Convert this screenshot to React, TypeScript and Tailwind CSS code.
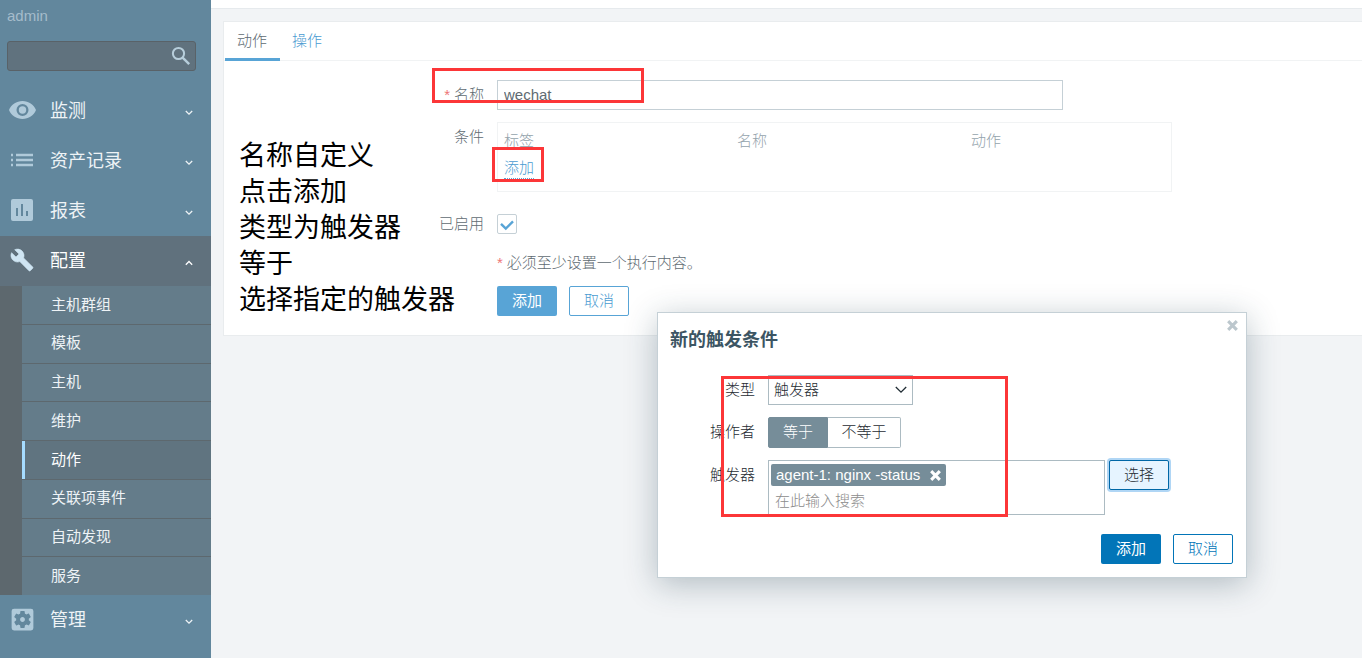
import React, { useState } from 'react';
import { MdSettingsApplications } from 'react-icons/md';

const configItems = ['主机群组', '模板', '主机', '维护', '动作', '关联项事件', '自动发现', '服务'];

const notes = ['名称自定义', '点击添加', '类型为触发器', '等于', '选择指定的触发器'];

function SearchIcon() {
  return (
    <svg viewBox="0 0 20 20" className="w-5 h-5" fill="none" stroke="currentColor" strokeWidth="2">
      <circle cx="7.5" cy="7.5" r="5.6" />
      <path d="M11.6 11.6l6.6 6.6" strokeWidth="2.4" />
    </svg>
  );
}

function EyeIcon() {
  return (
    <svg viewBox="0 0 27 18" className="w-[27px] h-[18px]" fill="currentColor" fillRule="evenodd">
      <path d="M13.5 0C7.4 0 2.2 3.7 0 9c2.2 5.3 7.4 9 13.5 9S24.8 14.3 27 9C24.8 3.7 19.6 0 13.5 0zM13.5 3a6 6 0 1 1 0 12a6 6 0 1 1 0-12z" />
      <circle cx="13.5" cy="9" r="3.7" />
    </svg>
  );
}

function ListIcon() {
  return (
    <svg viewBox="0 0 22 14" className="w-[22px] h-[14px]" fill="currentColor">
      <path d="M0 .7h2v2.6H0zM5 .7h17v2.6H5zM0 5.7h2v2.6H0zM5 5.7h17v2.6H5zM0 10.7h2v2.6H0zM5 10.7h17v2.6H5z" />
    </svg>
  );
}

function ReportIcon() {
  return (
    <svg viewBox="0 0 22 22" className="w-[22px] h-[22px]" fill="currentColor" fillRule="evenodd">
      <path d="M2 0h18a2 2 0 0 1 2 2v18a2 2 0 0 1-2 2H2a2 2 0 0 1-2-2V2a2 2 0 0 1 2-2zM5 9v8h2V9zM10 5v12h2V5zM15 12v5h2v-5z" />
    </svg>
  );
}

function WrenchIcon() {
  return (
    <svg viewBox="0 0 24 24" className="w-6 h-6" fill="currentColor" stroke="currentColor" strokeWidth=".6">
      <path d="M22.7 19l-9.1-9.1c.9-2.3.4-5-1.5-6.9-2-2-5-2.4-7.400-1.300L9 6 6 9 1.600 4.700C.4 7.100.9 10.100 2.900 12.100c1.900 1.900 4.600 2.400 6.900 1.500l9.100 9.100c.4.4 1 .4 1.400 0l2.300-2.300c.5-.4.5-1.100.1-1.400z" />
    </svg>
  );
}

function Chevron({ up = false }: { up?: boolean }) {
  return (
    <svg viewBox="0 0 8 6" className="w-2 h-[6px] mt-1" fill="none" stroke="currentColor" strokeWidth="1.3">
      <path d={up ? 'M.8 4.7L4 1.5l3.2 3.2' : 'M.8 1L4 4.2 7.2 1'} />
    </svg>
  );
}

function CrossIcon({ className }: { className: string }) {
  return (
    <svg viewBox="0 0 12 12" className={className} fill="none" stroke="currentColor" strokeWidth="3.4">
      <path d="M1.3 1.3l9.4 9.4M10.7 1.3l-9.4 9.4" />
    </svg>
  );
}

function MenuItem({ icon, label, open = false }: { icon: React.ReactNode; label: string; open?: boolean }) {
  return (
    <a
      href="#"
      className={
        open
          ? 'flex items-center h-[50px] pr-[18px] bg-[#60717d] text-white'
          : 'flex items-center h-[50px] pr-[18px] text-[#eef3f6]'
      }
    >
      <span
        className={
          open ? 'flex w-11 justify-center pb-[2px] text-[#cfe5f3]' : 'flex w-11 justify-center pb-[2px] text-[#b0cada]'
        }
      >
        {icon}
      </span>
      <span className="flex-1 pl-[6px] text-[18px]">{label}</span>
      <Chevron up={open} />
    </a>
  );
}

function Sidebar() {
  return (
    <aside className="w-[211px] shrink-0 bg-[#62879d] font-normal">
      <div className="px-[7px] pt-1 text-[#a5bccb] leading-6">admin</div>
      <div className="relative mt-[13px] ml-[7px] mr-[15px]">
        <input
          type="search"
          aria-label="搜索"
          className="block w-full h-[30px] rounded-[3px] border border-[#596268] bg-[#60727e] pl-2 pr-8 text-white outline-none"
        />
        <button aria-label="搜索" className="absolute right-[5px] top-[5px] text-[#b7cedb]">
          <SearchIcon />
        </button>
      </div>
      <nav className="mt-[15px]">
        <MenuItem icon={<EyeIcon />} label="监测" />
        <MenuItem icon={<ListIcon />} label="资产记录" />
        <MenuItem icon={<ReportIcon />} label="报表" />
        <MenuItem icon={<WrenchIcon />} label="配置" open />
        <ul className="grid grid-rows-8 gap-px h-[309px] pl-[22px] bg-[#5d686e]">
          {configItems.map((item) => (
            <li key={item} className="flex">
              <a
                href="#"
                className={
                  item === '动作'
                    ? 'flex flex-1 items-center border-l-[3px] border-[#a6dcff] bg-[#607480] pl-[26px] text-white'
                    : 'flex flex-1 items-center bg-[#647c8a] pl-[29px] text-[#eef3f6]'
                }
              >
                {item}
              </a>
            </li>
          ))}
        </ul>
        <MenuItem icon={<MdSettingsApplications size={29} />} label="管理" />
      </nav>
    </aside>
  );
}

function ActionForm() {
  const [name, setName] = useState('wechat');
  const [enabled, setEnabled] = useState(true);

  return (
    <section className="mt-3 ml-3 border border-r-0 border-[#e9ecee] bg-white pb-[19px] text-[#606b72]">
      <div className="flex h-[39px] border-b border-[#f1f3f4] pl-px">
        <a href="#" className="w-[55px] h-[39px] border-b-[3px] border-[#58a4d6] pl-3 leading-[38px]">
          动作
        </a>
        <a href="#" className="w-[55px] pl-3 leading-[38px] text-[#4a9bd1]">
          操作
        </a>
      </div>

      <form className="grid grid-cols-[260px_1fr] gap-x-[13px] pt-[19px]" onSubmit={(e) => e.preventDefault()}>
        <label htmlFor="name" className="h-[42px] text-right leading-[30px]">
          <span className="mr-1 text-[#ee7676]">*</span>名称
        </label>
        <div>
          <input
            id="name"
            value={name}
            onChange={(e) => setName(e.target.value)}
            className="block w-[566px] max-w-full h-[30px] border border-[#c5d0d6] px-[6px] pb-[2px] outline-none"
          />
        </div>

        <span className="text-right leading-[30px]">条件</span>
        <div className="w-[675px] max-w-full h-[70px] border border-[#f1f3f4] px-[6px] pt-1">
          <table className="w-full table-fixed text-left">
            <thead>
              <tr className="h-7 text-[#94a3ac]">
                <th className="w-[233px] p-0 font-light">标签</th>
                <th className="w-[234px] p-0 font-light">名称</th>
                <th className="p-0 font-light">动作</th>
              </tr>
            </thead>
            <tbody>
              <tr className="h-[26px]">
                <td colSpan={3} className="p-0">
                  <button type="button" className="border-b border-dotted border-[#58a4d6] leading-5 text-[#4a9bd1]">
                    添加
                  </button>
                </td>
              </tr>
            </tbody>
          </table>
        </div>

        <label htmlFor="enabled" className="mt-[22px] text-right leading-5">
          已启用
        </label>
        <div className="relative mt-[22px] w-5 h-5">
          <input
            id="enabled"
            type="checkbox"
            checked={enabled}
            onChange={(e) => setEnabled(e.target.checked)}
            className="block w-5 h-5 appearance-none rounded-[2px] border border-[#c5d0d6] bg-white"
          />
          {enabled && (
            <svg
              viewBox="0 0 20 20"
              className="pointer-events-none absolute inset-0 w-5 h-5"
              fill="none"
              stroke="#58a4d6"
              strokeWidth="2.4"
            >
              <path d="M4 9.8l4.8 4.8L16 7.4" />
            </svg>
          )}
        </div>

        <p className="col-start-2 mt-[19px] leading-5">
          <span className="mr-1 text-[#ee7676]">*</span>必须至少设置一个执行内容。
        </p>

        <div className="col-start-2 mt-[13px] flex gap-3">
          <button type="submit" className="w-[60px] h-[30px] rounded-[2px] bg-[#58a4d6] font-normal text-white">
            添加
          </button>
          <button type="button" className="w-[60px] h-[30px] rounded-[2px] border border-[#58a4d6] text-[#4a9bd1]">
            取消
          </button>
        </div>
      </form>
    </section>
  );
}

function ConditionDialog() {
  const [operator, setOperator] = useState('equals');

  return (
    <div
      role="dialog"
      aria-labelledby="dialog-title"
      className="absolute left-[446px] top-[312px] w-[590px] border border-[#c5d0d6] bg-white pb-[13px] pl-3 pr-[13px] text-[#1f2c33] shadow-[0_6px_30px_rgba(31,60,75,0.3)]"
    >
      <button aria-label="关闭" className="absolute right-2 top-[7px] text-[#bcc7cd]">
        <CrossIcon className="w-[11px] h-[11px]" />
      </button>
      <h2 id="dialog-title" className="pt-[15px] text-[18px] leading-6 font-bold text-[#3c5563]">
        新的触发条件
      </h2>

      <div className="mt-[23px] grid grid-cols-[85px_1fr] gap-x-[13px] gap-y-3">
        <label htmlFor="type" className="text-right leading-[30px]">
          类型
        </label>
        <div className="relative w-[145px]">
          <select id="type" className="block w-full h-[30px] appearance-none border border-[#acbbc2] bg-white px-[5px] outline-none">
            <option>触发器</option>
          </select>
          <svg
            viewBox="0 0 12 8"
            className="pointer-events-none absolute right-[6px] top-[11px] w-3 h-2"
            fill="none"
            stroke="currentColor"
            strokeWidth="1.3"
          >
            <path d="M.8 1L6 6.2 11.2 1" />
          </svg>
        </div>

        <span className="text-right leading-[30px]">操作者</span>
        <div className="flex h-[31px]">
          <label className="flex w-[60px] items-center justify-center rounded-l-[2px] border border-[#acbbc2] has-checked:border-[#768d99] has-checked:bg-[#768d99] has-checked:text-white">
            <input
              type="radio"
              name="operator"
              className="sr-only"
              checked={operator === 'equals'}
              onChange={() => setOperator('equals')}
            />
            等于
          </label>
          <label className="flex w-[73px] items-center justify-center rounded-r-[2px] border border-l-0 border-[#acbbc2] has-checked:border-[#768d99] has-checked:bg-[#768d99] has-checked:text-white">
            <input
              type="radio"
              name="operator"
              className="sr-only"
              checked={operator === 'differs'}
              onChange={() => setOperator('differs')}
            />
            不等于
          </label>
        </div>

        <label htmlFor="trigger" className="text-right leading-[30px]">
          触发器
        </label>
        <div className="flex items-start gap-1">
          <div className="w-[337px] h-[55px] border border-[#acbbc2] px-[2px] pt-[3px]">
            <span className="flex w-fit h-[22px] items-center rounded-[2px] bg-[#768d99] px-[5px] text-white">
              agent-1: nginx -status
              <button aria-label="移除" className="ml-[10px]">
                <CrossIcon className="w-[11px] h-[11px]" />
              </button>
            </span>
            <input
              id="trigger"
              placeholder="在此输入搜索"
              className="block w-full h-7 px-1 outline-none placeholder:text-[#8c8c8c]"
            />
          </div>
          <button className="w-[60px] h-[30px] rounded-[2px] border border-[#0067a6] bg-[#e6f4ff] shadow-[0_0_0_2px_#b0d6f5]">
            选择
          </button>
        </div>
      </div>

      <div className="mt-[19px] flex justify-end gap-3">
        <button className="w-[60px] h-[30px] rounded-[2px] bg-[#0275b8] font-normal text-white">添加</button>
        <button className="w-[60px] h-[30px] rounded-[2px] border border-[#0275b8] text-[#0275b8]">取消</button>
      </div>
    </div>
  );
}

export default function App() {
  return (
    <div className="flex min-h-screen bg-[#f2f4f6] font-['Liberation_Sans','Noto_Sans_CJK_SC',sans-serif] text-[15px] font-light">
      <Sidebar />
      <main className="relative flex-1 min-w-0">
        <div className="h-[9px] border-b border-[#e6eaed] bg-white" />
        <ActionForm />
        <ConditionDialog />

        {/* Tutorial notes and highlight frames drawn over the page */}
        <div className="pointer-events-none absolute left-7 top-[138px] text-[27px] leading-9 font-normal text-black">
          {notes.map((note) => (
            <p key={note}>{note}</p>
          ))}
        </div>
        <div className="pointer-events-none absolute left-[221px] top-[68px] w-[212px] h-[35px] border-3 border-[#fc3638]" />
        <div className="pointer-events-none absolute left-[281px] top-[147px] w-[52px] h-[35px] border-3 border-[#fc3638]" />
        <div className="pointer-events-none absolute left-[510px] top-[376px] w-[287px] h-[141px] border-3 border-[#fc3638]" />
      </main>
    </div>
  );
}
